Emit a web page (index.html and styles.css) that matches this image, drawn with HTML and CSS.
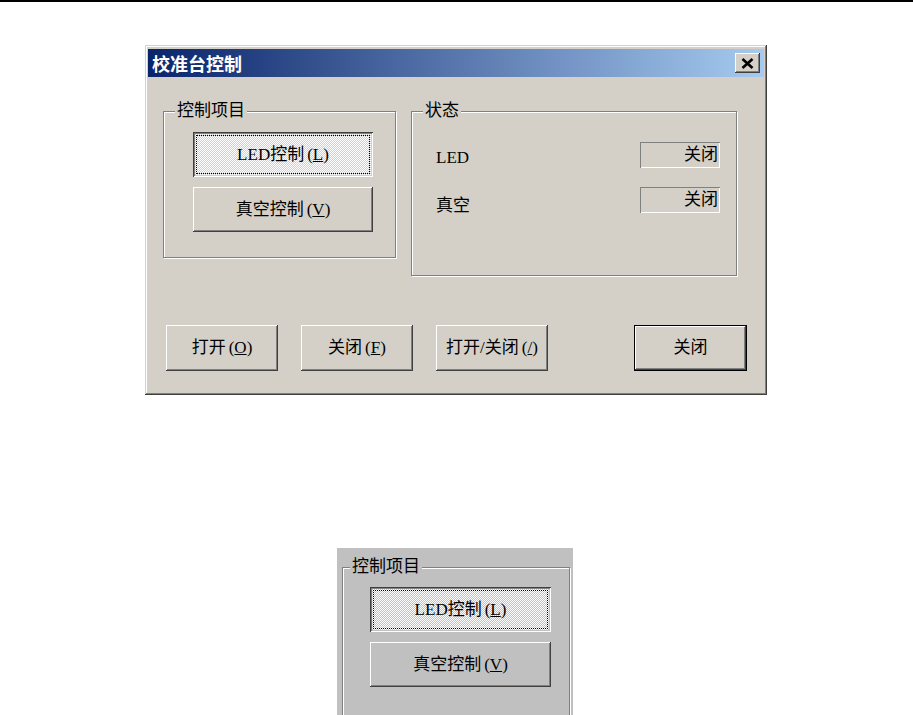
FILE: index.html
```html
<!DOCTYPE html>
<html lang="zh-CN">
<head>
  <meta charset="UTF-8">
  <meta name="viewport" content="width=device-width, initial-scale=1.0">
  <title>校准台控制</title>
  <link rel="stylesheet" href="styles.css">
</head>
<body>
  <div class="rule"></div>

  <div class="dialog">
    <div class="titlebar">
      <span class="title">校准台控制</span>
      <button class="close-btn" type="button">
        <svg width="13" height="11" viewBox="0 0 13 11">
          <path d="M1.5 1 L11.5 10 M11.5 1 L1.5 10" stroke="#000" stroke-width="2.6" fill="none"/>
        </svg>
      </button>
    </div>

    <div class="dialog-body">
      <div class="groups">
        <fieldset class="group group-items">
          <legend>控制项目</legend>
          <div class="group-body items-body">
            <button class="btn btn-item btn-checked" type="button">LED控制<span class="key">(<u>L</u>)</span></button>
            <button class="btn btn-item" type="button">真空控制<span class="key">(<u>V</u>)</span></button>
          </div>
        </fieldset>

        <fieldset class="group group-status">
          <legend>状态</legend>
          <div class="group-body status-body">
            <div class="status-row">
              <span class="status-label">LED</span>
              <span class="status-box">关闭</span>
            </div>
            <div class="status-row">
              <span class="status-label">真空</span>
              <span class="status-box">关闭</span>
            </div>
          </div>
        </fieldset>
      </div>

      <div class="actions">
        <button class="btn btn-action" type="button">打开<span class="key">(<u>O</u>)</span></button>
        <button class="btn btn-action" type="button">关闭<span class="key">(<u>F</u>)</span></button>
        <button class="btn btn-action" type="button">打开/关闭<span class="key">(<u>/</u>)</span></button>
        <button class="btn btn-action btn-default" type="button">关闭</button>
      </div>
    </div>
  </div>

  <div class="snapshot">
    <fieldset class="group group-snap">
      <legend>控制项目</legend>
      <div class="group-body snap-body">
        <button class="btn btn-item btn-checked" type="button">LED控制<span class="key">(<u>L</u>)</span></button>
        <button class="btn btn-item" type="button">真空控制<span class="key">(<u>V</u>)</span></button>
      </div>
    </fieldset>
  </div>
</body>
</html>
```

FILE: styles.css
```css
body {
  margin: 0;
  background: #fff;
  color: #000;
  font-family: "Liberation Serif", "Noto Sans CJK SC", serif;
  font-size: 17px;
}
.rule {
  height: 2px;
  background: #000;
}

/* window */
.dialog {
  --face: #d4d0c8;
  box-sizing: border-box;
  width: 622px;
  height: 350px;
  margin: 43px 0 0 145px;
  padding: 4px 3px 3px;
  background: var(--face);
  box-shadow: inset -1px -1px #404040, inset 1px 1px #d4d0c8,
              inset -2px -2px #808080, inset 2px 2px #fff;
}
.titlebar {
  display: flex;
  align-items: center;
  height: 28px;
  padding: 0 4px 0 4px;
  background: linear-gradient(to right, #0a246a, #a6caf0);
}
.title {
  flex: 1;
  color: #fff;
  font-family: "Noto Sans CJK SC", sans-serif;
  font-weight: bold;
  font-size: 18px;
  line-height: 28px;
}
.close-btn {
  appearance: none;
  border: 0;
  margin: 0;
  padding: 0;
  width: 25px;
  height: 20px;
  display: flex;
  align-items: center;
  justify-content: center;
  background: var(--face);
  box-shadow: inset -1px -1px #404040, inset 1px 1px #fff,
              inset -2px -2px #808080, inset 2px 2px var(--face);
}

.dialog-body {
  padding: 24px 17px 0 15px;
}
.groups {
  display: flex;
  align-items: flex-start;
  gap: 15px;
}

/* etched group boxes */
.group {
  box-sizing: border-box;
  margin: 0;
  padding: 0;
  min-inline-size: 0;
  border: 1px solid #808080;
  box-shadow: 1px 1px 0 #fff, inset 1px 1px 0 #fff;
}
.group legend {
  margin-left: 11px;
  padding: 0 2px;
  line-height: 20px;
  background: var(--face);
}
.group-items {
  width: 233px;
  height: 157px;
}
.group-status {
  width: 326px;
  height: 175px;
}
.items-body {
  display: flex;
  flex-direction: column;
  gap: 10px;
  padding: 11px 0 0 29px;
}
.status-body {
  display: flex;
  flex-direction: column;
  gap: 19px;
  padding: 21px 16px 0 24px;
}
.status-row {
  display: flex;
  align-items: center;
  justify-content: space-between;
  height: 26px;
}
.status-label {
  padding-top: 6px;
}
.status-box {
  box-sizing: border-box;
  width: 80px;
  height: 26px;
  padding-right: 2px;
  text-align: right;
  line-height: 25px;
  box-shadow: inset 1px 1px #808080, inset -1px -1px #fff;
}

/* push buttons */
.btn {
  appearance: none;
  border: 0;
  margin: 0;
  padding: 0;
  font: inherit;
  color: #000;
  line-height: 20px;
  white-space: nowrap;
  display: flex;
  align-items: center;
  justify-content: center;
  background-color: var(--face);
  box-shadow: inset -1px -1px #404040, inset 1px 1px #fff,
              inset -2px -2px #808080, inset 2px 2px var(--face);
}
.btn-item {
  width: 180px;
  height: 45px;
}
.btn-checked {
  background-image: repeating-conic-gradient(#fff 0 25%, var(--face) 0 50%);
  background-size: 2px 2px;
  box-shadow: inset 1px 1px #404040, inset -1px -1px #fff,
              inset 2px 2px #808080, inset -2px -2px var(--face);
  outline: 1px dotted #000;
  outline-offset: -4px;
}
.key {
  margin-left: 3px;
}

.actions {
  display: flex;
  gap: 23px;
  margin-top: 49px;
  padding-left: 3px;
}
.btn-action {
  width: 112px;
  height: 46px;
}
.btn-default {
  width: 113px;
  margin-left: auto;
  border: 1px solid #000;
}

/* lower snapshot of the group box */
.snapshot {
  --face: #c0c0c0;
  box-sizing: border-box;
  width: 236px;
  height: 167px;
  margin: 153px 0 0 337px;
  padding: 9px 0 0 5px;
  overflow: hidden;
  background: var(--face);
}
.group-snap {
  width: 228px;
  height: 170px;
}
.group-snap legend {
  margin-left: 7px;
}
.snap-body {
  display: flex;
  flex-direction: column;
  gap: 10px;
  padding: 10px 0 0 27px;
}
.snap-body .btn-item {
  width: 181px;
}
```
